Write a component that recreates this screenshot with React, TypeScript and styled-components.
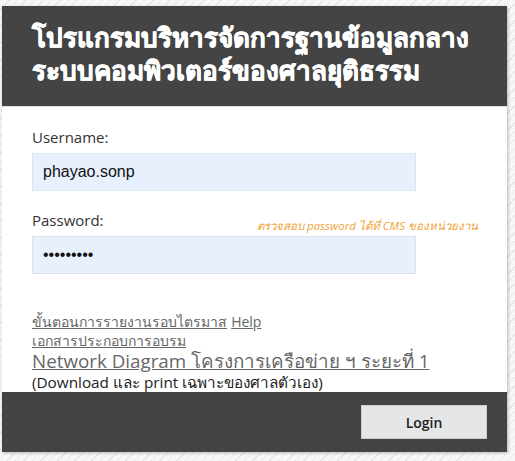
import styled, { createGlobalStyle } from "styled-components";

const GlobalStyle = createGlobalStyle`
  html, body {
    margin: 0;
    padding: 0;
  }
  body {
    width: 515px;
    height: 461px;
    overflow: hidden;
    background-color: #f7f7f7;
    background-image: repeating-linear-gradient(
      -45deg,
      #f7f7f7 0px,
      #f7f7f7 5px,
      #e6e6e6 5px,
      #e6e6e6 6px
    );
    font-family: "Open Sans", "DejaVu Sans", sans-serif;
  }
`;

export default function App() {
    return (
        <>
            <GlobalStyle/>
            <Card>
                <Header>
                    <Title>โปรแกรมบริหารจัดการฐานข้อมูลกลาง<br/>ระบบคอมพิวเตอร์ของศาลยุติธรรม</Title>
                </Header>
                <Body>
                    <Field>
                        <LabelRow>
                            <Label>Username:</Label>
                        </LabelRow>
                        <Input type="text" defaultValue="phayao.sonp"/>
                    </Field>
                    <Field>
                        <LabelRow>
                            <Label>Password:</Label>
                            <Hint>ตรวจสอบ password ได้ที่ CMS ของหน่วยงาน</Hint>
                        </LabelRow>
                        <Input type="password" defaultValue="123456789"/>
                    </Field>
                    <Links>
                        <div>
                            <SmallLink href="#">ขั้นตอนการรายงานรอบไตรมาส</SmallLink> <SmallLink href="#">Help</SmallLink>
                        </div>
                        <div>
                            <SmallLink href="#">เอกสารประกอบการอบรม</SmallLink>
                        </div>
                        <div>
                            <BigLink href="#">Network Diagram โครงการเครือข่าย ฯ ระยะที่ 1</BigLink>
                        </div>
                        <Note>(Download และ print เฉพาะของศาลตัวเอง)</Note>
                    </Links>
                </Body>
                <Footer>
                    <LoginButton type="button">Login</LoginButton>
                </Footer>
            </Card>
        </>
    )
}

const Card = styled.div`
  margin: 6px 0 0 2px;
  width: 505px;
  height: 446px;
  background: #fff;
  box-shadow: 1px 1px 3px rgba(0, 0, 0, 0.25);
  display: flex;
  flex-direction: column;
  overflow: hidden;
`

const Header = styled.div`
  background: #444;
  height: 101px;
  flex-shrink: 0;
  box-sizing: border-box;
  padding: 16px 10px 0 30px;
  border-bottom: 1px solid #ddd;
`

const Title = styled.h1`
  margin: 0;
  color: #fff;
  font-family: "DejaVu Sans", "Noto Sans", sans-serif;
  font-weight: bold;
  font-size: 26px;
  line-height: 33px;
  -webkit-text-stroke: 0.7px #fff;
  white-space: nowrap;
`

const Body = styled.div`
  flex: 1;
  padding: 16px 0 0 30px;
  display: flex;
  flex-direction: column;
  overflow: hidden;
`

const Field = styled.div`
  display: flex;
  flex-direction: column;
  margin-bottom: 15px;
`

const LabelRow = styled.div`
  display: flex;
  align-items: flex-end;
  width: 446px;
  height: 24px;
`

const Label = styled.span`
  font-size: 15px;
  color: #333;
`

const Hint = styled.span`
  margin-left: auto;
  font-size: 11.5px;
  font-style: italic;
  color: #f0a33a;
  margin-bottom: -5px;
`

const Input = styled.input`
  width: 384px;
  height: 38px;
  box-sizing: border-box;
  margin-top: 6px;
  padding: 0 10px;
  background: #e8f0fe;
  border: 1px solid #dde3ea;
  font-family: "Liberation Sans", Arial, sans-serif;
  font-size: 16px;
  color: #111;
  outline: none;
`

const Links = styled.div`
  margin-top: 23px;
  display: flex;
  flex-direction: column;
  line-height: 19px;
`

const SmallLink = styled.a`
  font-size: 14px;
  color: #666;
  text-decoration: underline;
`

const BigLink = styled.a`
  font-size: 18.8px;
  line-height: 23px;
  color: #666;
  text-decoration: underline;
`

const Note = styled.div`
  font-size: 15.3px;
  line-height: 18px;
  color: #222;
`

const Footer = styled.div`
  background: #444;
  height: 60px;
  flex-shrink: 0;
  display: flex;
  justify-content: flex-end;
  align-items: center;
  padding-right: 20px;
`

const LoginButton = styled.button`
  width: 126px;
  height: 34px;
  background: #e6e6e6;
  border: 1px solid #ccc;
  font-family: "Open Sans", sans-serif;
  font-weight: 600;
  font-size: 14px;
  color: #222;
  cursor: pointer;
`
